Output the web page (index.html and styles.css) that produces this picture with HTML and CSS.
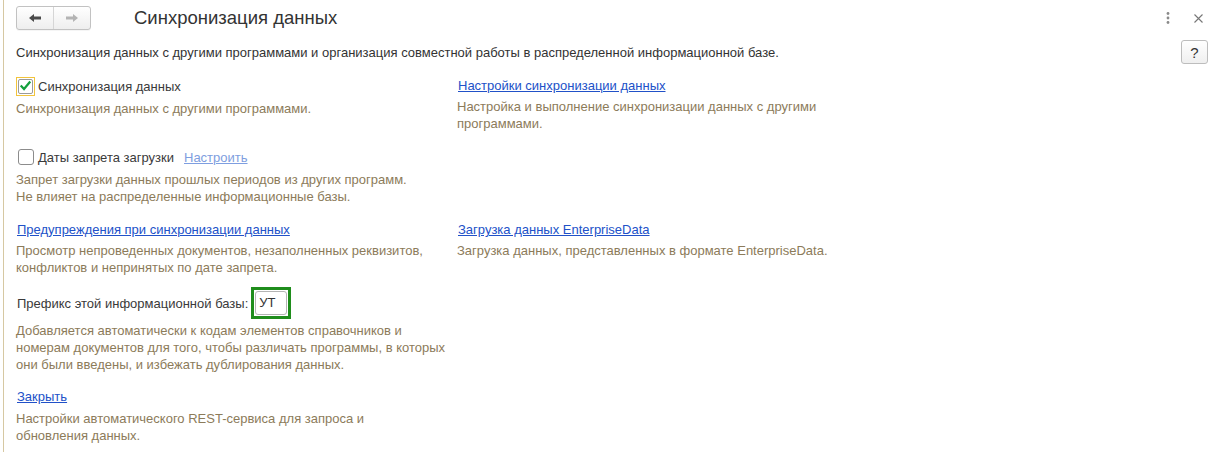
FILE: index.html
```html
<!DOCTYPE html>
<html lang="ru">
<head>
<meta charset="utf-8">
<title>Синхронизация данных</title>
<link rel="stylesheet" href="styles.css">
</head>
<body>
<div class="page">
  <div class="header">
    <div class="nav">
      <span class="nav-btn"><svg width="14" height="10" viewBox="0 0 14 10"><path d="M1 5 L6 1 L6 3.5 L13 3.5 L13 6.5 L6 6.5 L6 9 Z" fill="#4a4a4a"/></svg></span>
      <span class="nav-btn"><svg width="14" height="10" viewBox="0 0 14 10"><path d="M13 5 L8 1 L8 3.5 L1 3.5 L1 6.5 L8 6.5 L8 9 Z" fill="#b4b4b4"/></svg></span>
    </div>
    <h1 class="title">Синхронизация данных</h1>
    <div class="win-tools">
      <svg class="kebab" width="4" height="12" viewBox="0 0 4 12"><circle cx="2" cy="1.5" r="1.4" fill="#8a8a8a"/><circle cx="2" cy="6" r="1.4" fill="#8a8a8a"/><circle cx="2" cy="10.5" r="1.4" fill="#8a8a8a"/></svg>
      <svg class="close" width="9" height="9" viewBox="0 0 9 9"><path d="M0.5 0.5 L8.5 8.5 M8.5 0.5 L0.5 8.5" stroke="#777" stroke-width="1.1"/></svg>
    </div>
  </div>

  <div class="intro">
    <span>Синхронизация данных с другими программами и организация совместной работы в распределенной информационной базе.</span>
    <span class="help">?</span>
  </div>

  <div class="row row-1">
    <div class="cell">
      <div class="check-line">
        <span class="cb focus"><span class="cb-box"><svg width="15" height="13" viewBox="0 0 15 13"><path d="M2 6.5 L5.8 10.5 L13 1.8" fill="none" stroke="#14a03c" stroke-width="2.6"/></svg></span></span>
        <span class="label">Синхронизация данных</span>
      </div>
      <p class="desc">Синхронизация данных с другими программами.</p>
    </div>
    <div class="cell right-first">
      <a class="link line" href="#">Настройки синхронизации данных</a>
      <p class="desc">Настройка и выполнение синхронизации данных с другими<br>программами.</p>
    </div>
  </div>

  <div class="row row-2">
    <div class="cell">
      <div class="check-line">
        <span class="cb"><span class="cb-box plain"></span></span>
        <span class="label">Даты запрета загрузки</span>
        <a class="link light" href="#">Настроить</a>
      </div>
      <p class="desc">Запрет загрузки данных прошлых периодов из других программ.<br>Не влияет на распределенные информационные базы.</p>
    </div>
  </div>

  <div class="row row-3">
    <div class="cell">
      <a class="link line" href="#">Предупреждения при синхронизации данных</a>
      <p class="desc">Просмотр непроведенных документов, незаполненных реквизитов,<br>конфликтов и непринятых по дате запрета.</p>
    </div>
    <div class="cell">
      <a class="link line" href="#">Загрузка данных EnterpriseData</a>
      <p class="desc">Загрузка данных, представленных в формате EnterpriseData.</p>
    </div>
  </div>

  <div class="row row-4">
    <div class="cell">
      <div class="prefix-line">
        <span class="label">Префикс этой информационной базы:</span>
        <span class="field-focus"><span class="field">УТ</span></span>
      </div>
      <p class="desc">Добавляется автоматически к кодам элементов справочников и<br>номерам документов для того, чтобы различать программы, в которых<br>они были введены, и избежать дублирования данных.</p>
    </div>
  </div>

  <div class="row row-5">
    <div class="cell">
      <a class="link line" href="#">Закрыть</a>
      <p class="desc">Настройки автоматического REST-сервиса для запроса и<br>обновления данных.</p>
    </div>
  </div>
</div>
</body>
</html>
```

FILE: styles.css
```css
html, body {
  margin: 0;
  padding: 0;
  background: #ffffff;
}
body {
  font-family: "Liberation Sans", Arial, sans-serif;
  font-size: 13px;
  color: #333333;
}
.page {
  margin-left: 3px;
  border-left: 1px solid #d6c8a2;
  height: 452px;
  padding-left: 12px;
  box-sizing: border-box;
}
.header {
  display: flex;
  align-items: flex-start;
  height: 40px;
}
.nav {
  display: flex;
  margin-top: 6px;
  height: 22px;
  border: 1px solid #c2c2c2;
  border-radius: 3px;
  background: linear-gradient(#ffffff, #eeeeee);
  box-shadow: 0 1px 0 rgba(0,0,0,0.04);
}
.nav-btn {
  width: 36px;
  display: flex;
  align-items: center;
  justify-content: center;
}
.nav-btn + .nav-btn {
  border-left: 1px solid #d6d6d6;
}
.title {
  margin: 7px 0 0 43px;
  font-size: 18.5px;
  font-weight: normal;
  line-height: 22px;
  color: #333333;
}
.win-tools {
  margin-left: auto;
  margin-top: 12px;
  display: flex;
  align-items: center;
  gap: 24px;
  padding-right: 13px;
}
.close { margin-top: 1px; }
.intro {
  display: flex;
  align-items: center;
  justify-content: space-between;
  height: 24px;
  padding-right: 8px;
  line-height: 17px;
}
.help {
  width: 25px;
  height: 22px;
  border: 1px solid #bdbdbd;
  border-radius: 3px;
  background: linear-gradient(#ffffff, #efefef);
  display: flex;
  align-items: center;
  justify-content: center;
  font-size: 15px;
  color: #333;
}
.row {
  display: grid;
  grid-template-columns: 441px 1fr;
}
.row-1 { margin-top: 12px; }
.row-2 { margin-top: 15px; }
.row-3 { margin-top: 16px; }
.row-4 { margin-top: 11px; }
.row-5 { margin-top: 15px; }
.cell { display: flex; flex-direction: column; align-items: flex-start; }
.right-first { padding-top: 1px; }
.check-line {
  display: flex;
  align-items: center;
  height: 20px;
}
.cb {
  width: 19px;
  height: 19px;
  box-sizing: border-box;
  border: 1px solid transparent;
  display: flex;
  align-items: center;
  justify-content: center;
  margin-right: 3px;
}
.cb.focus { border-color: #f2c43c; }
.cb-box {
  width: 15px;
  height: 15px;
  box-sizing: border-box;
  border: 1px solid #9a9a9a;
  border-radius: 2px;
  background: #fff;
  display: flex;
  align-items: center;
  justify-content: center;
}
.cb-box svg { margin-top: -1px; }
.cb-box.plain {
  width: 16px;
  height: 16px;
  border-color: #8c8c8c;
  border-radius: 3px;
}
.label { color: #3a3a3a; line-height: 17px; }
.link {
  color: #2151c8;
  text-decoration: underline;
  line-height: 17px;
}
.link.line { margin-left: 1px; }
.link.light {
  color: #7e9ee0;
  margin-left: 10px;
}
.desc {
  margin: 4px 0 0 0;
  line-height: 17px;
  color: #8c7b5a;
}
.prefix-line {
  display: flex;
  align-items: center;
  height: 32px;
  margin-left: 1px;
}
.field-focus {
  margin-left: 3px;
  width: 40px;
  height: 32px;
  box-sizing: border-box;
  border: 3px solid #1f8d1c;
  padding: 1px;
}
.field {
  display: block;
  height: 100%;
  box-sizing: border-box;
  border: 1px solid #b4b4b4;
  border-radius: 3px;
  padding-left: 3px;
  line-height: 22px;
  color: #333;
}
.row-4 .desc { margin-top: 3px; }
.row-5 .desc { margin-top: 5px; }
```
